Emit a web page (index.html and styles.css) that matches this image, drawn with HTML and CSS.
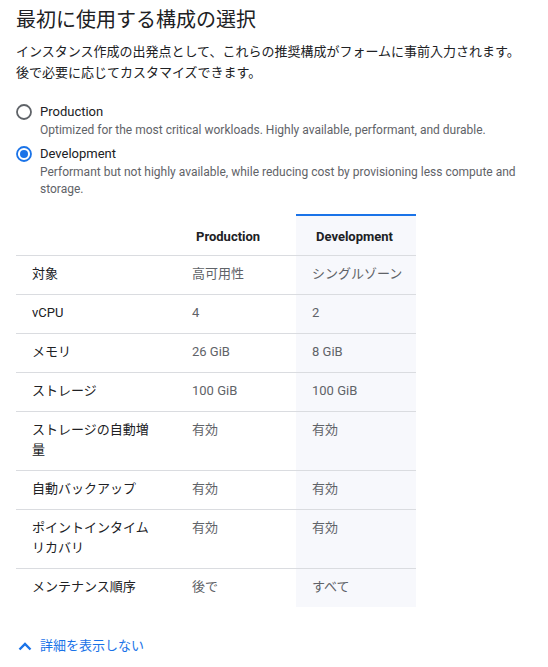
FILE: index.html
```html
<!DOCTYPE html>
<html lang="ja">
<head>
<meta charset="utf-8">
<link rel="stylesheet" href="styles.css">
</head>
<body>
<div class="page">
  <h1 class="title">最初に使用する構成の選択</h1>
  <p class="intro">インスタンス作成の出発点として、これらの推奨構成がフォームに事前入力されます。<br>後で必要に応じてカスタマイズできます。</p>

  <div class="options">
    <div class="option">
      <div class="option-row">
        <svg class="radio" width="16" height="16" viewBox="0 0 16 16"><circle cx="8" cy="8" r="7" fill="none" stroke="#5f6368" stroke-width="1.8"/></svg>
        <span class="option-label">Production</span>
      </div>
      <div class="option-desc">Optimized for the most critical workloads. Highly available, performant, and durable.</div>
    </div>
    <div class="option">
      <div class="option-row">
        <svg class="radio" width="16" height="16" viewBox="0 0 16 16"><circle cx="8" cy="8" r="7" fill="none" stroke="#1a73e8" stroke-width="1.8"/><circle cx="8" cy="8" r="4" fill="#1a73e8"/></svg>
        <span class="option-label">Development</span>
      </div>
      <div class="option-desc">Performant but not highly available, while reducing cost by provisioning less compute and storage.</div>
    </div>
  </div>

  <table class="compare">
    <colgroup><col class="c1"><col class="c2"><col class="c3"></colgroup>
    <thead>
      <tr>
        <th></th>
        <th>Production</th>
        <th class="dev">Development</th>
      </tr>
    </thead>
    <tbody>
      <tr><td class="lbl">対象</td><td>高可用性</td><td class="dev">シングルゾーン</td></tr>
      <tr><td class="lbl">vCPU</td><td>4</td><td class="dev">2</td></tr>
      <tr><td class="lbl">メモリ</td><td>26 GiB</td><td class="dev">8 GiB</td></tr>
      <tr><td class="lbl">ストレージ</td><td>100 GiB</td><td class="dev">100 GiB</td></tr>
      <tr><td class="lbl">ストレージの自動増量</td><td>有効</td><td class="dev">有効</td></tr>
      <tr><td class="lbl">自動バックアップ</td><td>有効</td><td class="dev">有効</td></tr>
      <tr><td class="lbl">ポイントインタイムリカバリ</td><td>有効</td><td class="dev">有効</td></tr>
      <tr><td class="lbl">メンテナンス順序</td><td>後で</td><td class="dev">すべて</td></tr>
    </tbody>
  </table>

  <a class="toggle" href="#">
    <svg class="chev" width="14" height="10" viewBox="0 0 14 10"><polyline points="1.5,8.5 7,3 12.5,8.5" fill="none" stroke="#1a73e8" stroke-width="2.4"/></svg>
    <span>詳細を表示しない</span>
  </a>
</div>
</body>
</html>
```
FILE: styles.css
```css
html, body {
  margin: 0;
  padding: 0;
  background: #ffffff;
}
body {
  font-family: Roboto, "Noto Sans CJK JP", sans-serif;
  color: #202124;
}
.page {
  padding: 6px 0 0 16px;
}
.title {
  margin: 0;
  font-size: 20px;
  font-weight: 400;
  line-height: 28px;
  color: #202124;
}
.intro {
  margin: 7px 0 0;
  font-size: 13px;
  line-height: 21px;
  color: #202124;
}
.options {
  margin-top: 19px;
  display: flex;
  flex-direction: column;
  gap: 5px;
}
.option-row {
  display: flex;
  align-items: center;
  gap: 8px;
}
.radio {
  display: block;
  flex: none;
}
.option-label {
  font-size: 13px;
  line-height: 20px;
  color: #202124;
}
.option-desc {
  padding-left: 24px;
  padding-right: 16px;
  font-size: 12px;
  line-height: 17px;
  color: #5f6368;
}
.compare {
  margin-top: 16px;
  border-collapse: collapse;
  table-layout: fixed;
  width: 400px;
  font-size: 13px;
}
.c1 { width: 160px; }
.c2 { width: 120px; }
.c3 { width: 120px; }
.compare th {
  text-align: left;
  font-weight: 700;
  color: #202124;
  line-height: 20px;
  padding: 11px 8px 8px 20px;
  border-top: 2px solid transparent;
  border-bottom: 1px solid #dadce0;
}
.compare th.dev {
  border-top-color: #1a73e8;
}
.compare td {
  vertical-align: top;
  line-height: 20px;
  padding: 8px 8px 10px 16px;
  color: #5f6368;
  border-bottom: 1px solid #dadce0;
}
.compare tbody tr:last-child td {
  border-bottom: none;
}
.compare td.lbl {
  color: #202124;
  padding-right: 16px;
}
.compare .dev {
  background: #f7f8fc;
}
.toggle {
  margin-top: 29px;
  display: inline-flex;
  align-items: center;
  gap: 8px;
  padding-left: 2px;
  color: #1a73e8;
  text-decoration: none;
  font-size: 13px;
  line-height: 20px;
}
.chev {
  display: block;
}
```
